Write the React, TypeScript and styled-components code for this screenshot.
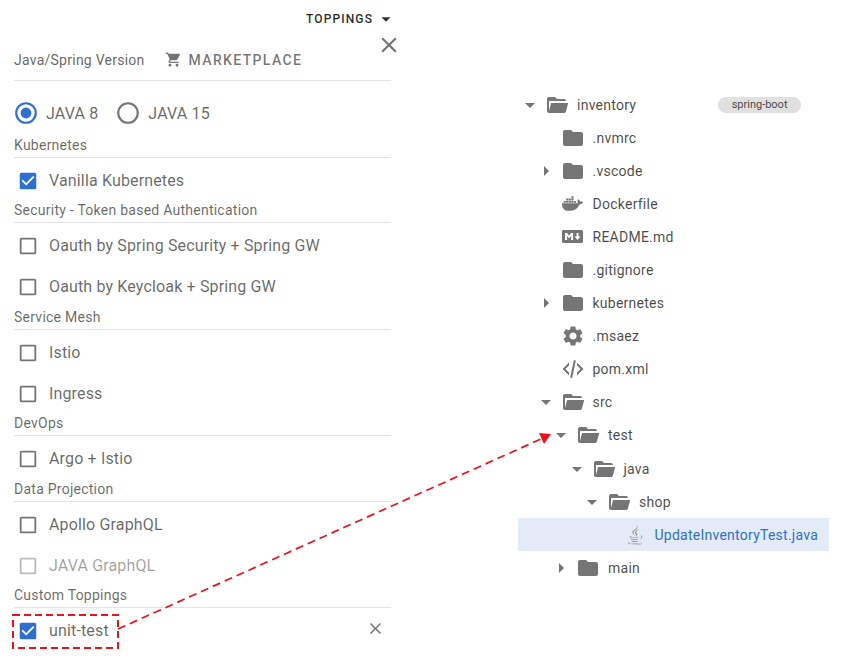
import { ReactNode } from 'react'
import styled, { createGlobalStyle } from 'styled-components'
import { FaDocker, FaJava, FaMarkdown } from 'react-icons/fa'
import { MdSettings, MdShoppingCart } from 'react-icons/md'

const GlobalStyle = createGlobalStyle`
  html, body {
    margin: 0;
    padding: 0;
    background: #fff;
    font-family: Roboto, "Liberation Sans", sans-serif;
  }
`

const Page = styled.div({
  position: "relative",
  display: "flex",
  width: "841px",
  height: "659px",
  overflow: "hidden",
})

const Panel = styled.div({
  width: "377px",
  marginLeft: "14px",
  flexShrink: 0,
})

const Toolbar = styled.div({
  display: "flex",
  alignItems: "center",
  justifyContent: "flex-end",
  gap: "2px",
  height: "38px",
  marginRight: "-6px",
  fontSize: "12px",
  fontWeight: 500,
  letterSpacing: "1.1px",
  color: "rgba(0,0,0,.85)",
})

const Header = styled.div({
  position: "relative",
  display: "flex",
  alignItems: "center",
  gap: "20px",
  height: "43px",
  paddingTop: "1px",
  boxSizing: "border-box",
  borderBottom: "1px solid #e4e4e4",
  fontSize: "14px",
  letterSpacing: ".25px",
  color: "rgba(0,0,0,.62)",
})

const Marketplace = styled.div({
  display: "flex",
  alignItems: "center",
  gap: "7px",
  fontSize: "14px",
  fontWeight: 500,
  letterSpacing: "1.35px",
  color: "rgba(0,0,0,.55)",
})

const CloseButton = styled.div({
  position: "absolute",
  right: "-10.5px",
  top: "-6px",
  lineHeight: 0,
  color: "#757575",
})

const RadioRow = styled.div({
  display: "flex",
  alignItems: "center",
  height: "38px",
  marginTop: "13px",
  marginBottom: "4px",
  marginLeft: "-1px",
})

const RadioItem = styled.div({
  display: "flex",
  alignItems: "center",
  gap: "7px",
  marginRight: "17px",
  fontSize: "16px",
  letterSpacing: ".15px",
  color: "rgba(0,0,0,.6)",
})

const SectionLabel = styled.div<{ $before?: number }>`
  height: 19px;
  line-height: 19px;
  padding-bottom: 2px;
  margin-top: ${p => p.$before || 0}px;
  margin-bottom: 2px;
  border-bottom: 1px solid #e4e4e4;
  font-size: 14px;
  letter-spacing: .25px;
  color: rgba(0, 0, 0, .6);
`

const CheckRow = styled.div<{ $disabled?: boolean }>`
  display: flex;
  align-items: center;
  height: 41px;
  gap: 10px;
  padding-left: 3px;
  font-size: 16px;
  letter-spacing: .15px;
  color: ${p => p.$disabled ? "rgba(0,0,0,.38)" : "rgba(0,0,0,.6)"};
`

const RowClose = styled.div({
  marginLeft: "auto",
  marginRight: "6px",
  marginTop: "-4px",
  lineHeight: 0,
  color: "#757575",
})

const Tree = styled.div({
  marginLeft: "127px",
  paddingTop: "88px",
  width: "311px",
  flexShrink: 0,
})

const TreeRow = styled.div<{ $level: number; $active?: boolean }>`
  display: flex;
  align-items: center;
  height: 33.1px;
  padding-left: ${p => p.$level * 15.5}px;
  font-size: 14px;
  letter-spacing: .25px;
  color: ${p => p.$active ? "#2f6fd0" : "rgba(0,0,0,.72)"};
  background: ${p => p.$active ? "#e3ebf6" : "transparent"};
`

const CaretSlot = styled.div({
  display: "flex",
  alignItems: "center",
  justifyContent: "center",
  width: "24px",
  height: "24px",
  color: "#757575",
  flexShrink: 0,
})

const IconSlot = styled.div({
  display: "flex",
  alignItems: "center",
  justifyContent: "center",
  width: "24px",
  height: "24px",
  margin: "0 8px 0 3px",
  color: "#757575",
  flexShrink: 0,
})

const Chip = styled.div({
  marginLeft: "auto",
  marginRight: "28px",
  height: "16px",
  lineHeight: "16px",
  padding: "0 13.5px",
  borderRadius: "8px",
  background: "#e0e0e0",
  fontSize: "11px",
  letterSpacing: 0,
  color: "rgba(0,0,0,.72)",
})

const Annotation = styled.svg({
  position: "absolute",
  left: 0,
  top: 0,
  pointerEvents: "none",
})

const Mdi = ({ d, size = 24, color }: { d: string, size?: number, color?: string }) => (
  <svg width={size} height={size} viewBox="0 0 24 24" fill={color || "currentColor"}>
    <path d={d} />
  </svg>
)

const paths = {
  down: "M7,10L12,15L17,10H7Z",
  right: "M10,17L15,12L10,7V17Z",
  close: "M19,6.41L17.59,5L12,10.59L6.41,5L5,6.41L10.59,12L5,17.59L6.41,19L12,13.41L17.59,19L19,17.59L13.41,12L19,6.41Z",
  checked: "M10,17L5,12L6.41,10.58L10,14.17L17.59,6.58L19,8M19,3H5C3.89,3 3,3.89 3,5V19A2,2 0 0,0 5,21H19A2,2 0 0,0 21,19V5C21,3.89 20.1,3 19,3Z",
  unchecked: "M19,3H5C3.89,3 3,3.89 3,5V19A2,2 0 0,0 5,21H19A2,2 0 0,0 21,19V5C21,3.89 20.1,3 19,3M19,5V19H5V5H19Z",
  radioOn: "M12,20A8,8 0 0,1 4,12A8,8 0 0,1 12,4A8,8 0 0,1 20,12A8,8 0 0,1 12,20M12,2A10,10 0 0,0 2,12A10,10 0 0,0 12,22A10,10 0 0,0 22,12A10,10 0 0,0 12,2M12,7A5,5 0 0,0 7,12A5,5 0 0,0 12,17A5,5 0 0,0 17,12A5,5 0 0,0 12,7Z",
  radioOff: "M12,20A8,8 0 0,1 4,12A8,8 0 0,1 12,4A8,8 0 0,1 20,12A8,8 0 0,1 12,20M12,2A10,10 0 0,0 2,12A10,10 0 0,0 12,22A10,10 0 0,0 22,12A10,10 0 0,0 12,2Z",
  folder: "M10,4H4C2.89,4 2,4.89 2,6V18A2,2 0 0,0 4,20H20A2,2 0 0,0 22,18V8C22,6.89 21.1,6 20,6H12L10,4Z",
  folderOpen: "M19,20H4C2.89,20 2,19.1 2,18V6C2,4.89 2.89,4 4,4H10L12,6H19A2,2 0 0,1 21,8H21L4,8V18L6.14,10H23.21L20.93,18.5C20.7,19.37 19.92,20 19,20Z",
  xml: "M12.89,3L14.85,3.4L11.11,21L9.15,20.6L12.89,3M19.59,12L16,8.41V5.58L22.42,12L16,18.41V15.58L19.59,12M1.58,12L8,5.58V8.41L4.41,12L8,15.58V18.41L1.58,12Z",
}

const Check = ({ label, on, disabled, children }: { label: string, on?: boolean, disabled?: boolean, children?: ReactNode }) => (
  <CheckRow $disabled={disabled}>
    <Mdi
      d={on ? paths.checked : paths.unchecked}
      size={22}
      color={on ? "#2f6fd0" : disabled ? "#bdbdbd" : "#757575"}
    />
    {label}
    {children}
  </CheckRow>
)

type Node = {
  name: string
  level: number
  caret?: 'down' | 'right'
  icon: ReactNode
  active?: boolean
  chip?: string
}

const closedFolder = <Mdi d={paths.folder} />
const openFolder = <Mdi d={paths.folderOpen} />

const nodes: Node[] = [
  { name: "inventory", level: 0, caret: 'down', icon: openFolder, chip: "spring-boot" },
  { name: ".nvmrc", level: 1, icon: closedFolder },
  { name: ".vscode", level: 1, caret: 'right', icon: closedFolder },
  { name: "Dockerfile", level: 1, icon: <FaDocker size={21} /> },
  { name: "README.md", level: 1, icon: <FaMarkdown size={21} /> },
  { name: ".gitignore", level: 1, icon: closedFolder },
  { name: "kubernetes", level: 1, caret: 'right', icon: closedFolder },
  { name: ".msaez", level: 1, icon: <MdSettings size={24} /> },
  { name: "pom.xml", level: 1, icon: <Mdi d={paths.xml} /> },
  { name: "src", level: 1, caret: 'down', icon: openFolder },
  { name: "test", level: 2, caret: 'down', icon: openFolder },
  { name: "java", level: 3, caret: 'down', icon: openFolder },
  { name: "shop", level: 4, caret: 'down', icon: openFolder },
  { name: "UpdateInventoryTest.java", level: 5, icon: <FaJava size={20} color="#8a8a8a" />, active: true },
  { name: "main", level: 2, caret: 'right', icon: closedFolder },
]

export default function App() {
  return (
    <Page>
      <GlobalStyle />
      <Panel>
        <Toolbar>
          TOPPINGS
          <Mdi d={paths.down} size={22} color="rgba(0,0,0,.8)" />
        </Toolbar>
        <Header>
          Java/Spring Version
          <Marketplace>
            <MdShoppingCart size={17} />
            MARKETPLACE
          </Marketplace>
          <CloseButton><Mdi d={paths.close} size={26} /></CloseButton>
        </Header>
        <RadioRow>
          <RadioItem>
            <Mdi d={paths.radioOn} size={26} color="#2f6fd0" />
            JAVA 8
          </RadioItem>
          <RadioItem>
            <Mdi d={paths.radioOff} size={26} color="#757575" />
            JAVA 15
          </RadioItem>
        </RadioRow>

        <SectionLabel>Kubernetes</SectionLabel>
        <Check label="Vanilla Kubernetes" on />

        <SectionLabel>Security - Token based Authentication</SectionLabel>
        <Check label="Oauth by Spring Security + Spring GW" />
        <Check label="Oauth by Keycloak + Spring GW" />

        <SectionLabel $before={1}>Service Mesh</SectionLabel>
        <Check label="Istio" />
        <Check label="Ingress" />

        <SectionLabel>DevOps</SectionLabel>
        <Check label="Argo + Istio" />

        <SectionLabel $before={1}>Data Projection</SectionLabel>
        <Check label="Apollo GraphQL" />
        <Check label="JAVA GraphQL" disabled />

        <SectionLabel>Custom Toppings</SectionLabel>
        <Check label="unit-test" on>
          <RowClose><Mdi d={paths.close} size={19} /></RowClose>
        </Check>
      </Panel>

      <Tree>
        {nodes.map(node => (
          <TreeRow key={node.name} $level={node.level} $active={node.active}>
            <CaretSlot>
              {node.caret && <Mdi d={paths[node.caret]} />}
            </CaretSlot>
            <IconSlot>{node.icon}</IconSlot>
            {node.name}
            {node.chip && <Chip>{node.chip}</Chip>}
          </TreeRow>
        ))}
      </Tree>

      <Annotation width="841" height="659" viewBox="0 0 841 659">
        <rect x="13" y="615" width="105" height="33" fill="none" stroke="#f0101a" strokeWidth="2" strokeDasharray="7 4" />
        <line x1="118" y1="629" x2="541" y2="439" stroke="#f0101a" strokeWidth="1.7" strokeDasharray="8 5" />
        <polygon points="551,434 539,433 544,444" fill="#f0101a" />
      </Annotation>
    </Page>
  )
}
